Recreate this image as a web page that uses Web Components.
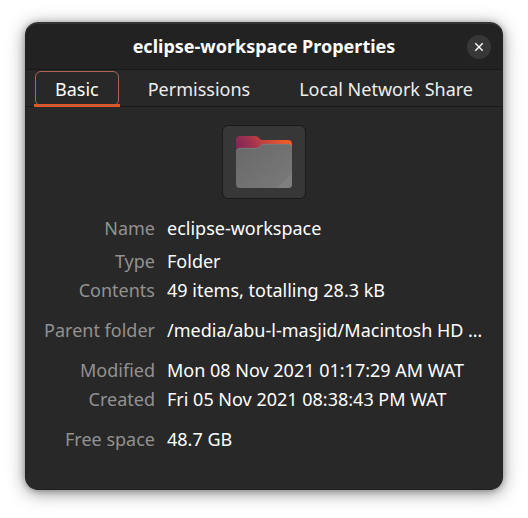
<!DOCTYPE html>
<html lang="en">
<head>
<meta charset="utf-8">
<meta name="viewport" content="width=device-width, initial-scale=1">
<title>eclipse-workspace Properties</title>
<style>
  html { background: #fff; }
  body {
    margin: 0;
    padding: 22px 25px 28px;
    font-family: "Noto Sans", "Open Sans", sans-serif;
    font-size: 18px;
    line-height: 24px;
    color: #fff;
  }
</style>
</head>
<body>
<properties-dialog>
  <dialog-header slot="header">eclipse-workspace Properties</dialog-header>
  <tab-strip slot="tabs">
    <tab-item active>Basic</tab-item>
    <tab-item>Permissions</tab-item>
    <tab-item>Local Network Share</tab-item>
  </tab-strip>
  <folder-button></folder-button>
  <property-list>
    <property-group compact>
      <property-row label="Name">eclipse-workspace</property-row>
    </property-group>
    <property-group>
      <property-row label="Type">Folder</property-row>
      <property-row label="Contents">49 items, totalling 28.3 kB</property-row>
    </property-group>
    <property-group>
      <property-row label="Parent folder">/media/abu-l-masjid/Macintosh HD …</property-row>
    </property-group>
    <property-group>
      <property-row label="Modified">Mon 08 Nov 2021 01:17:29 AM WAT</property-row>
      <property-row label="Created">Fri 05 Nov 2021 08:38:43 PM WAT</property-row>
    </property-group>
    <property-group>
      <property-row label="Free space">48.7 GB</property-row>
    </property-group>
  </property-list>
</properties-dialog>

<script>
const define = (name, html, setup) => {
  const template = document.createElement('template');
  template.innerHTML = html;
  customElements.define(name, class extends HTMLElement {
    constructor() {
      super();
      this.attachShadow({ mode: 'open' }).append(template.content.cloneNode(true));
    }
    connectedCallback() {
      if (setup) setup(this, this.shadowRoot);
    }
  });
};

define('properties-dialog', `
  <style>
    :host {
      display: block;
      border-radius: 13px;
      box-shadow: 0 3px 18px rgba(0,0,0,.42), 0 1px 6px rgba(0,0,0,.28);
    }
    section {
      box-sizing: border-box;
      overflow: hidden;
      border: 1px solid #202020;
      border-top: 2px solid #353535;
      border-radius: 13px;
      background: #282828;
    }
    main {
      display: flex;
      flex-direction: column;
      align-items: center;
      gap: 17px;
      padding: 18px 18px 22px;
    }
  </style>
  <section role="dialog" aria-label="eclipse-workspace Properties">
    <slot name="header"></slot>
    <slot name="tabs"></slot>
    <main><slot></slot></main>
  </section>`);

define('dialog-header', `
  <style>
    :host { display: block; background: #222; border-bottom: 1px solid #181818; }
    header {
      display: grid;
      grid-template-columns: 24px 1fr 24px;
      align-items: center;
      padding: 10px 11px;
    }
    h1 { grid-column: 2; margin: 0; font-size: 18px; line-height: 25px; font-weight: 700; text-align: center; white-space: nowrap; }
    button {
      display: grid;
      place-items: center;
      width: 24px;
      height: 24px;
      padding: 0;
      border: 0;
      border-radius: 50%;
      background: #373737;
      color: #fff;
    }
  </style>
  <header>
    <h1><slot></slot></h1>
    <button type="button" aria-label="Close">
      <svg width="10" height="10" viewBox="0 0 10 10" fill="none" stroke="currentColor" stroke-width="1.4" aria-hidden="true"><path d="M1.300 1.300 8.700 8.700M8.700 1.300 1.300 8.700"/></svg>
    </button>
  </header>`);

define('tab-strip', `
  <style>
    :host { display: block; border-bottom: 1px solid #191919; }
    nav { display: flex; justify-content: space-between; padding: 0 8px; }
  </style>
  <nav role="tablist"><slot></slot></nav>`);

define('tab-item', `
  <style>
    :host { display: block; }
    :host([active]) { border-bottom: 3px solid #e95420; margin-bottom: -1px; }
    button {
      display: block;
      box-sizing: border-box;
      height: 35px;
      margin: 1px 1px 0;
      padding: 0 19px;
      border: 1px solid transparent;
      border-radius: 6px;
      background: none;
      color: #eee;
      font: inherit;
      white-space: nowrap;
    }
    :host([active]) button { border-color: #ad6650; color: #fff; margin-bottom: -2px; }
  </style>
  <button type="button" role="tab"><slot></slot></button>`,
  (host, root) => root.querySelector('button').setAttribute('aria-selected', host.hasAttribute('active')));

define('folder-button', `
  <style>
    :host { display: block; }
    button {
      display: grid;
      place-items: center;
      box-sizing: border-box;
      width: 84px;
      height: 74px;
      padding: 0;
      border: 1px solid #191919;
      border-radius: 6px;
      background: #373737;
    }
  </style>
  <button type="button" aria-label="Choose folder icon">
    <svg width="58" height="54" viewBox="0 0 58 54" aria-hidden="true">
      <defs>
        <linearGradient id="back" x1="0" y1="1" x2="1" y2="0.75">
          <stop offset="0" stop-color="#78215c"/><stop offset=".38" stop-color="#9b304f"/>
          <stop offset=".6" stop-color="#c04040"/><stop offset="1" stop-color="#ef5a26"/>
        </linearGradient>
        <linearGradient id="front" x1="0" y1="0" x2="1" y2="1">
          <stop offset="0" stop-color="#686868"/><stop offset="1" stop-color="#7a7a7a"/>
        </linearGradient>
      </defs>
      <path fill="url(#back)" d="M1 20V5q0-4 4-4H20q2 0 3 1l2 2q1 1 3 1H53q4 0 4 4V20Z"/>
      <path fill="url(#front)" d="M1 17q0-4 4-4H21q2 0 3-1l2-2q1-1 3-1H53q4 0 4 4V49q0 4-4 4H5q-4 0-4-4Z"/>
      <path fill="#7f7f7f" d="M57 38V49q0 4-4 4H42Z"/>
      <path fill="none" stroke="#828282" stroke-width=".7" d="M1.500 16q1-2.700 4-2.700H21q2 0 3-1l2-2q1-1 3-1H53q2.500 0 3.500 2.500"/>
    </svg>
  </button>`);

define('property-list', `
  <style>
    :host { display: block; align-self: stretch; }
  </style>
  <slot></slot>`);

define('property-group', `
  <style>
    :host { display: flex; flex-direction: column; gap: 5px; padding-bottom: 16px; }
    :host([compact]) { padding-bottom: 9px; }
  </style>
  <slot></slot>`);

define('property-row', `
  <style>
    :host { display: block; }
    dl { display: grid; grid-template-columns: 111px minmax(0, 1fr); gap: 12px; margin: 0; }
    dt { color: #929292; text-align: right; white-space: nowrap; }
    dd { margin: 0; overflow: hidden; text-overflow: ellipsis; white-space: nowrap; }
  </style>
  <dl><dt></dt><dd><slot></slot></dd></dl>`,
  (host, root) => { root.querySelector('dt').textContent = host.getAttribute('label'); });
</script>
</body>
</html>
